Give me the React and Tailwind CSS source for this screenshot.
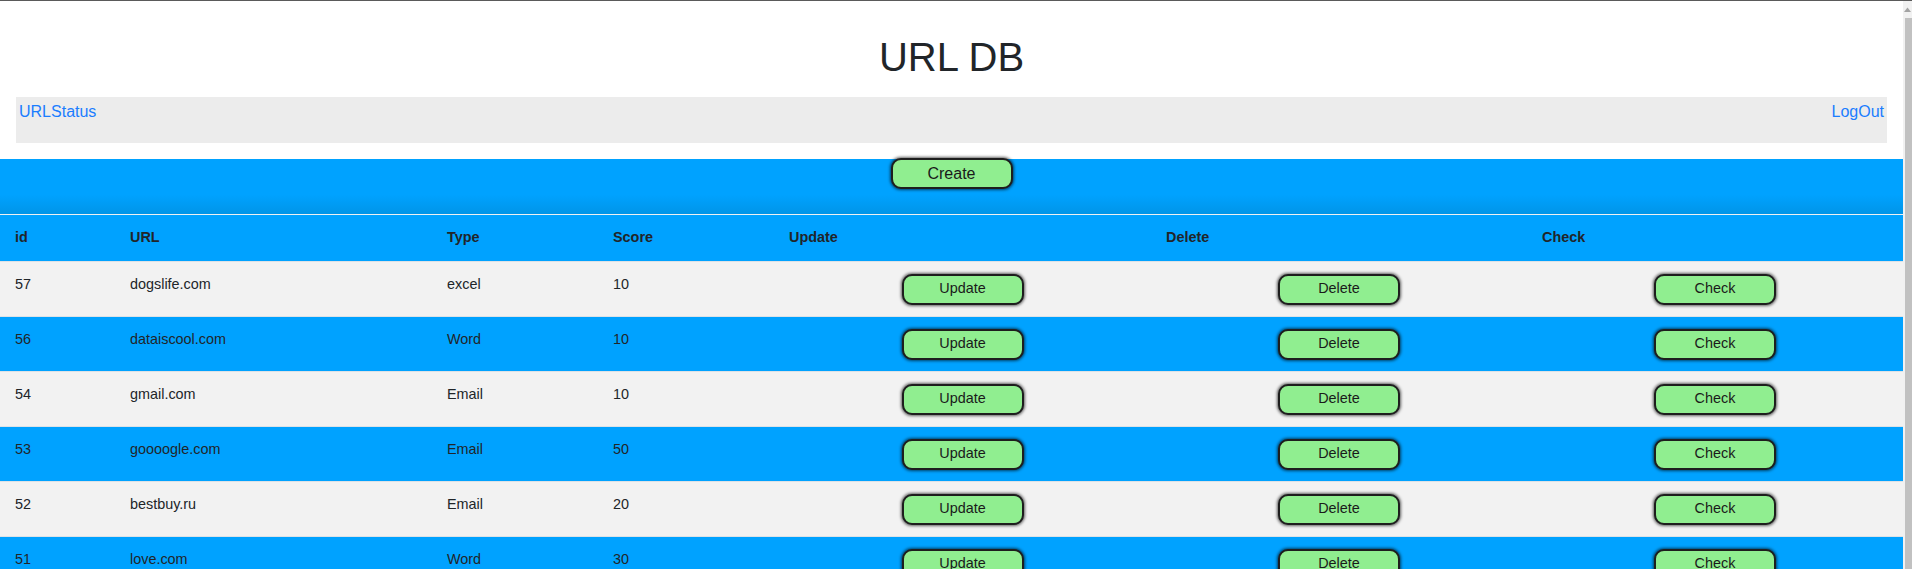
const rows = [
  { id: 57, url: 'dogslife.com', type: 'excel', score: 10 },
  { id: 56, url: 'dataiscool.com', type: 'Word', score: 10 },
  { id: 54, url: 'gmail.com', type: 'Email', score: 10 },
  { id: 53, url: 'goooogle.com', type: 'Email', score: 50 },
  { id: 52, url: 'bestbuy.ru', type: 'Email', score: 20 },
  { id: 51, url: 'love.com', type: 'Word', score: 30 },
];

const cols = 'grid grid-cols-[115px_317px_166px_176px_377px_376px_376px]';

function GreenButton({ children, big }) {
  return (
    <button
      className={
        'h-[31px] w-[122px] rounded-[10px] border-2 border-[#1e1e1e] bg-[#90ee90] text-[#1a1a1a] shadow-[0_0_3px_1px_rgba(0,0,0,0.6)] ' +
        (big ? '-mt-px text-[16px]' : 'text-[14.4px]')
      }
    >
      {children}
    </button>
  );
}

export default function App() {
  return (
    <div className="flex min-h-[569px] border-t border-[#5a5a5a] bg-white font-['Liberation_Sans',Arial,sans-serif] text-[#212529]">
      <div className="w-[1903px] flex-none">
        {/* Title */}
        <h1 className="mt-[32px] text-center text-[40px] leading-[48px] font-normal">URL DB</h1>

        {/* Nav */}
        <div className="mx-4 mt-4 flex h-[46px] justify-between bg-[#ececec] px-[3px] pt-[3px] text-base leading-6">
          <a className="text-[#1a7dff]">URLStatus</a>
          <a className="text-[#1a7dff]">LogOut</a>
        </div>

        {/* Create band */}
        <div className="mt-4 flex h-[55px] justify-center bg-linear-to-b from-[#00a2ff] from-65% to-[#0095e8]">
          <GreenButton big>Create</GreenButton>
        </div>

        {/* Table */}
        <div className="text-[14.4px] leading-[21.6px]">
          <div className={cols + ' border-t border-[#eef0f2] bg-[#00a2ff] font-bold'}>
            {['id', 'URL', 'Type', 'Score', 'Update', 'Delete', 'Check'].map((h) => (
              <div key={h} className="px-[15px] py-3">
                {h}
              </div>
            ))}
          </div>
          {rows.map((r, i) => (
            <div
              key={r.id}
              className={cols + ' h-[55px] border-t border-[#dee2e6] ' + (i % 2 === 0 ? 'bg-[#f2f2f2]' : 'bg-[#00a2ff]')}
            >
              <div className="px-[15px] pt-3">{r.id}</div>
              <div className="px-[15px] pt-3">{r.url}</div>
              <div className="px-[15px] pt-3">{r.type}</div>
              <div className="px-[15px] pt-3">{r.score}</div>
              <div className="flex items-start justify-center px-[15px] pt-3">
                <GreenButton>Update</GreenButton>
              </div>
              <div className="flex items-start justify-center px-[15px] pt-3">
                <GreenButton>Delete</GreenButton>
              </div>
              <div className="flex items-start justify-center px-[15px] pt-3">
                <GreenButton>Check</GreenButton>
              </div>
            </div>
          ))}
        </div>
      </div>

      {/* Scrollbar */}
      <div className="flex w-[9px] flex-none flex-col bg-[#f1f1f1]">
        <div className="flex h-[17px] items-center justify-center">
          <svg width="7" height="5" viewBox="0 0 7 5">
            <path d="M0 5 L3.5 0.5 L7 5 Z" fill="#a3a3a3" />
          </svg>
        </div>
        <div className="ml-[2px] flex-1 bg-[#c1c1c1]" />
      </div>
    </div>
  );
}
